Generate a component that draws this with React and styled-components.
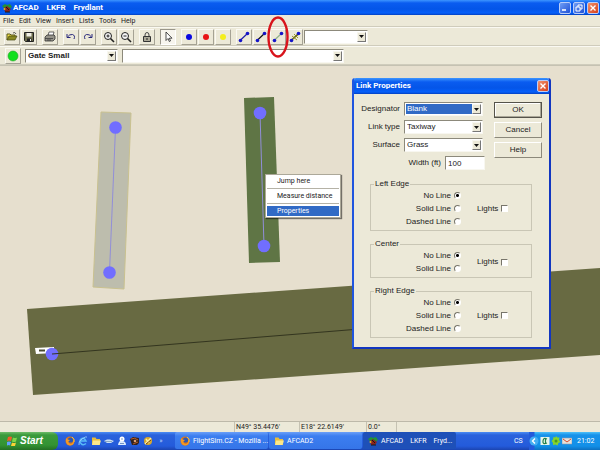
import React from "react";
import styled, { createGlobalStyle, css } from "styled-components";

const Global = createGlobalStyle`
  * { box-sizing: border-box; }
  body { margin: 0; font-family: Roboto, "Liberation Sans", sans-serif; font-size: 7px; color: #222; }
  button, select, input { font: inherit; color: inherit; margin: 0; padding: 0; border: 0; background: none; border-radius: 0; }
  svg { display: block; flex: none; }
`;

const Desktop = styled.div`
  display: flex;
  flex-direction: column;
  min-height: 100vh;
  overflow: hidden;
  background: #ece9d8;
`;

const TitleBar = styled.header`
  display: flex;
  align-items: center;
  height: 15px;
  padding: 0 1px 0 2px;
  gap: 1px;
  background: linear-gradient(#3d95ff 0, #0a5cf0 3px, #0455e8 9px, #0560fa 13px, #0340c0 15px);
  color: #fff;
`;

const TitleText = styled.h1`
  display: flex;
  flex: 1;
  gap: 8px;
  margin: 0;
  font-size: 8px;
  line-height: 12px;
`;

const WindowButton = styled.button`
  display: grid;
  place-items: center;
  width: 12px;
  height: 12px;
  border: 1px solid #b9cdf8;
  border-radius: 2px;
  background: ${(p) => (p.$close ? "linear-gradient(135deg, #f0936f, #d8401a)" : "linear-gradient(135deg, #6f9df5, #1f51d6)")};
`;

const WindowControls = styled.div`
  display: flex;
  gap: 2px;
`;

const MenuBar = styled.nav`
  display: flex;
  height: 12px;
  padding-left: 3px;
  gap: 5px;
  border-bottom: 1px solid #cfccbc;
`;

const MenuButton = styled.button`
  line-height: 10px;
`;

const Toolbar = styled.div`
  display: flex;
  align-items: center;
  height: 19px;
  padding-left: ${(p) => p.$indent || 4}px;
  gap: ${(p) => p.$gap || 5}px;
  border-top: 1px solid #faf9f2;
  border-bottom: 1px solid #cfccbc;
`;

const ToolGroup = styled.div`
  display: flex;
  align-items: center;
  gap: 1px;
`;

const ToolButton = styled.button`
  position: relative;
  display: grid;
  place-items: center;
  width: 16px;
  height: 16px;
  border: 1px solid;
  border-color: ${(p) => (p.$pressed ? "#99968a #fff #fff #99968a" : "#faf9f2 #a5a294 #a5a294 #faf9f2")};
  background: ${(p) => (p.$pressed ? "#f7f5ee" : "#ece9d8")};
`;

const Ring = styled.svg`
  position: absolute;
  left: 50%;
  top: 50%;
  transform: translate(-50%, -50%);
  z-index: 2;
  pointer-events: none;
`;

const ComboFrame = styled.span`
  display: flex;
  align-items: stretch;
  width: ${(p) => p.$width}px;
  height: 14px;
  padding: 1px;
  border: 1px solid;
  border-color: #8c897b #f8f7f0 #f8f7f0 #8c897b;
  background: #fff;
`;

const ComboSelect = styled.select`
  appearance: none;
  flex: 1;
  min-width: 0;
  padding-left: 1px;
  font-family: "Liberation Sans", Arial, sans-serif;
  font-size: 8px;
  line-height: 10px;
  outline: none;
  ${(p) => p.$bold && css`font-weight: 700;`}
  ${(p) => p.$active && css`background: #316ac5; color: #fff;`}
`;

const ComboArrow = styled.span`
  display: grid;
  place-items: center;
  width: 9px;
  border: 1px solid;
  border-color: #f8f7f0 #777 #777 #f8f7f0;
  background: #ece9d8;
`;

const Workspace = styled.main`
  position: relative;
  flex: 1;
  min-height: 356px;
  border-top: 1px solid #c5c2b2;
  background: #e6dfce;
`;

const MapDrawing = styled.svg`
  position: absolute;
  inset: 0;
  width: 100%;
  height: 100%;
`;

const ContextMenu = styled.div`
  position: absolute;
  left: 265px;
  top: 108px;
  width: 76px;
  padding: 1px;
  border: 1px solid #aca899;
  background: #fff;
  box-shadow: 1px 1px 1px rgba(0, 0, 0, 0.5);
`;

const ContextItem = styled.button`
  display: block;
  width: 100%;
  height: 10px;
  padding-left: 10px;
  line-height: 10px;
  text-align: left;
  ${(p) => p.$active && css`background: #316ac5; color: #fff;`}
`;

const ContextRule = styled.hr`
  height: 1px;
  margin: 2px 0;
  border: 0;
  background: #b5b2a6;
`;

const DialogWindow = styled.section`
  position: absolute;
  left: 352px;
  top: 12px;
  width: 199px;
  border: solid #1236c0;
  border-width: 0 2px 2px;
  border-left-color: #1f55df;
  border-radius: 3px 3px 0 0;
  background: #ece9d8;
  font-family: "Liberation Sans", Arial, sans-serif;
  font-size: 8px;
  line-height: 10px;
`;

const DialogTitle = styled.div`
  display: flex;
  align-items: center;
  height: 16px;
  padding-left: 2px;
  background: linear-gradient(#3d95ff 0, #0a5cf0 4px, #0455e8 10px, #0560fa 14px, #0340c0 16px);
  border-radius: 2px 2px 0 0;
  color: #fff;
`;

const DialogHeading = styled.h2`
  flex: 1;
  margin: 0;
  font-family: Roboto, sans-serif;
  font-size: 8px;
`;

const DialogBody = styled.form`
  padding: 8px 7px 9px 5px;
`;

const DialogTop = styled.div`
  display: flex;
  justify-content: space-between;
  align-items: flex-start;
`;

const Fields = styled.div`
  display: flex;
  flex-direction: column;
  gap: 4px;
`;

const Field = styled.div`
  display: flex;
  align-items: center;
  justify-content: flex-end;
  gap: 4px;
  width: 124px;
`;

const WidthField = styled(Field)`
  width: 126px;
`;

const WidthInput = styled.input`
  width: 40px;
  height: 14px;
  padding-left: 2px;
  border: 1px solid;
  border-color: #8c897b #f8f7f0 #f8f7f0 #8c897b;
  background: #fff;
`;

const DialogActions = styled.div`
  display: flex;
  flex-direction: column;
  gap: 4px;
`;

const ActionButton = styled.button`
  width: 48px;
  height: 16px;
  border: 1px solid;
  border-color: ${(p) => (p.$default ? "#55534a" : "#fff #8c897b #8c897b #fff")};
  box-shadow: ${(p) => (p.$default ? "inset -1px -1px 0 #aaa798, inset 1px 1px 0 #fff" : "none")};
`;

const Groups = styled.div`
  display: flex;
  flex-direction: column;
  gap: 8px;
  margin: 9px 10px 0 11px;
`;

const Group = styled.fieldset`
  min-width: 0;
  margin: 0;
  padding: 0 0 2px;
  border: 1px solid #c9c6b5;
`;

const Legend = styled.legend`
  height: 10px;
  margin-left: 3px;
  padding: 0 1px;
`;

const GroupRow = styled.div`
  display: flex;
  align-items: center;
  gap: 16px;
`;

const Radios = styled.div`
  display: flex;
  flex-direction: column;
  width: 90px;
`;

const Choice = styled.label`
  display: flex;
  align-items: center;
  justify-content: flex-end;
  gap: 3px;
  height: 13px;
`;

const Radio = styled.input`
  appearance: none;
  width: 7px;
  height: 7px;
  border: 1px solid;
  border-color: #77756a #fff #fff #77756a;
  border-radius: 50%;
  background: #fff;
  &:checked { background: radial-gradient(circle, #000 0 1px, #fff 2px); }
`;

const Check = styled.input`
  appearance: none;
  width: 7px;
  height: 7px;
  border: 1px solid;
  border-color: #77756a #fff #fff #77756a;
  background: #fff;
`;

const StatusBar = styled.footer`
  display: grid;
  grid-template-columns: 235px 65px 67px 30px 1fr;
  height: 11px;
  border-top: 1px solid #bdb9a9;
`;

const StatusCell = styled.div`
  padding-left: 1px;
  border-right: 1px solid #c5c2b2;
  line-height: 10px;
  white-space: nowrap;
`;

const Taskbar = styled.div`
  display: flex;
  height: 18px;
  background: linear-gradient(#4b8cf3 0, #2a62dc 3px, #245bdb 14px, #1b44b0 18px);
  color: #fff;
`;

const StartButton = styled.button`
  display: flex;
  align-items: center;
  gap: 3px;
  width: 58px;
  padding-left: 7px;
  border-radius: 0 6px 6px 0;
  background: linear-gradient(#6dbb68 0, #3b9a3b 3px, #339333 13px, #246f24 18px);
  color: #fff;
  font-family: "Liberation Sans", Arial, sans-serif;
  font-size: 10px;
  font-style: italic;
  font-weight: 700;
  line-height: 18px;
`;

const QuickLaunch = styled.div`
  display: flex;
  align-items: center;
  gap: 3px;
  width: 117px;
  padding-left: 7px;
`;

const QuickButton = styled.button`
  display: grid;
  place-items: center;
  width: 10px;
  height: 12px;
  color: #b7cdf8;
`;

const Tasks = styled.div`
  display: flex;
  flex: 1;
  gap: 1px;
`;

const Task = styled.button`
  display: flex;
  align-items: center;
  gap: 3px;
  flex: 0 1 93px;
  height: 17px;
  padding-left: 5px;
  border-radius: 2px;
  background: ${(p) => (p.$active ? "#1e50b8" : "linear-gradient(#6ba0f8, #3c7ef0 4px, #3575e8)")};
  color: #fff;
  white-space: pre;
`;

const Language = styled.span`
  align-self: center;
  width: 15px;
`;

const Tray = styled.div`
  display: flex;
  align-items: center;
  gap: 1px;
  width: 71px;
  background: linear-gradient(90deg, #245bdb 0 5px, transparent 6px), linear-gradient(#4cc0fa 0, #1792ea 3px, #1290e8 14px, #0d70c0 18px);
`;

const Clock = styled.time`
  padding-left: 4px;
`;

const icons = {
  open: (
    <>
      <path d="M1 9V3h3l1 1h4v2" fill="#f4e24a" stroke="#56571a" />
      <path d="M1 9l2-4h8L9 9z" fill="#8a8a22" stroke="#44450f" strokeWidth=".7" />
      <path d="M7 2q2-1.500 3 1" fill="none" stroke="#333" strokeWidth=".8" />
    </>
  ),
  save: (
    <>
      <path d="M1.500 1.500h9v9h-8l-1-1z" fill="#6b6b4a" stroke="#222" />
      <path d="M3.500 2h5v3.500h-5z" fill="#f1efe5" />
      <path d="M4 7.500h4.500v3H4z" fill="#222" />
      <path d="M7 8h1v2H7z" fill="#eee" />
    </>
  ),
  print: (
    <>
      <path d="M4 5l1-4h5L9 5z" fill="#fff" stroke="#444" strokeWidth=".8" />
      <path d="M1 6l2-2h7l1 1v3l-2 2H1z" fill="#96948a" stroke="#333" strokeWidth=".8" />
      <path d="M1 7.500h8M3 9h4" stroke="#333" strokeWidth=".7" />
    </>
  ),
  undo: <path d="M2 3v3.500h3.500M2.500 6q2-3 5-2.500 3 1 1.500 4.500" fill="none" stroke="#25257a" />,
  redo: <path d="M10 3v3.500H6.500M9.500 6q-2-3-5-2.500-3 1-1.500 4.500" fill="none" stroke="#25257a" />,
  zoomIn: (
    <>
      <circle cx="5" cy="5" r="3.500" fill="#f5f5f5" stroke="#222" />
      <path d="M3.500 5h3M5 3.500v3" stroke="#222" />
      <path d="M7.500 7.500L11 11" stroke="#222" strokeWidth="1.600" />
    </>
  ),
  zoomOut: (
    <>
      <circle cx="5" cy="5" r="3.500" fill="#f5f5f5" stroke="#222" />
      <path d="M3.500 5h3" stroke="#222" />
      <path d="M7.500 7.500L11 11" stroke="#222" strokeWidth="1.600" />
    </>
  ),
  lock: (
    <>
      <path d="M4 6V4q0-2.500 2-2.500T8 4v2" fill="none" stroke="#444" />
      <path d="M2.500 5.500h7v5h-7z" fill="#aaa796" stroke="#333" />
      <path d="M6 7v2" stroke="#222" />
    </>
  ),
  pointer: <path d="M4 1v8.500l2-2 1.300 3 1.200-.6-1.200-2.700H10z" fill="#fff" stroke="#222" strokeWidth=".8" />,
  blue: <circle cx="6" cy="6" r="3" fill="#0808e0" />,
  red: <circle cx="6" cy="6" r="3" fill="#e81414" />,
  yellow: <circle cx="6" cy="6" r="3" fill="#f4ee1c" />,
  green: <circle cx="6" cy="6" r="5" fill="#0fe01c" stroke="#25a52a" strokeWidth=".6" />,
};

function Icon({ name }) {
  return <svg width="12" height="12" viewBox="0 0 12 12" aria-hidden="true">{icons[name]}</svg>;
}

function LinkIcon({ color, hatch }) {
  return (
    <svg width="12" height="12" viewBox="0 0 12 12" aria-hidden="true">
      <path d="M2 9.500L9.500 2.500" stroke={color} strokeWidth="1.200" />
      {hatch && <path d="M3 5l5 4M5 3l4 4M3 9l6-5" stroke="#8f8c18" strokeWidth=".9" />}
      <circle cx="2.500" cy="9.500" r="1.800" fill="#1414c8" />
      <circle cx="9.500" cy="2.500" r="1.800" fill="#1414c8" />
    </svg>
  );
}

function PlaneIcon() {
  return (
    <svg width="10" height="10" viewBox="0 0 10 10" aria-hidden="true">
      <path d="M0 3l3-2 2 1 3-1 2 3-3 2H3z" fill="#219338" />
      <path d="M2 5l3-2 4 3-2 3H3z" fill="#8b241c" />
      <path d="M3 9h5M4 4l3 3" stroke="#191919" />
      <circle cx="2.500" cy="6" r="1" fill="#e6b220" />
    </svg>
  );
}

function Firefox() {
  return (
    <svg width="10" height="10" viewBox="0 0 10 10" aria-hidden="true">
      <circle cx="5" cy="5" r="4.500" fill="#e0761a" />
      <circle cx="5.500" cy="4" r="2.600" fill="#2b58b4" />
      <path d="M1 2q1 2 4 2L3 6l2 2q3 0 4-4 1 5-4 5.500Q0 9 1 2" fill="#f29a24" />
      <path d="M7 1q3 2 2 5" fill="none" stroke="#f7c63b" />
    </svg>
  );
}

function Folder() {
  return (
    <svg width="10" height="10" viewBox="0 0 10 10" aria-hidden="true">
      <path d="M1 1.500h3.500l1 1.500H9v6H1z" fill="#e8bd3c" />
      <path d="M2 4.500h8L8.500 9H1z" fill="#fbe88b" />
    </svg>
  );
}

const quickIcons = [
  ["Firefox", <Firefox key="i" />],
  ["Internet Explorer", (
    <svg key="i" width="10" height="10" viewBox="0 0 10 10">
      <path d="M8 7.500Q5 10 3 7.500T3 3q3-2 5 2H3" fill="none" stroke="#58baf8" strokeWidth="1.500" />
      <path d="M1 9Q0 6 4 3t5-2" fill="none" stroke="#9fdcff" strokeWidth=".8" />
    </svg>
  )],
  ["Explorer", <Folder key="i" />],
  ["Flight", (
    <svg key="i" width="10" height="10" viewBox="0 0 10 10">
      <path d="M0 5l3-1.500h3L10 5 7 7H3z" fill="#cde1f5" />
      <path d="M1 5.500h7" stroke="#6b8fae" strokeWidth=".7" />
    </svg>
  )],
  ["Messenger", (
    <svg key="i" width="10" height="10" viewBox="0 0 10 10">
      <circle cx="5" cy="3" r="2.500" fill="#fff" />
      <path d="M1 9q1-5 4-4 4 0 4 4z" fill="#dcecff" />
      <path d="M4 3h2M3 7.500h4" stroke="#587fb8" strokeWidth=".8" />
    </svg>
  )],
  ["Eye", (
    <svg key="i" width="10" height="10" viewBox="0 0 10 10">
      <path d="M0 3l3-2 6 1v5L7 9H2z" fill="#34221c" />
      <path d="M1 3q4-2 7 1M3 8l5-2" stroke="#b85c23" fill="none" />
      <circle cx="5" cy="5" r="1.300" fill="#d9a178" />
    </svg>
  )],
  ["Tools", (
    <svg key="i" width="10" height="10" viewBox="0 0 10 10">
      <circle cx="5" cy="5" r="4" fill="#d8a82e" />
      <path d="M2 8l6-6M3 3l3 4" stroke="#fff0a0" strokeWidth="1.500" />
      <path d="M3 8l5-4" stroke="#7c4b16" />
    </svg>
  )],
];

function Combo({ id, width, value, label, bold, active }) {
  return (
    <ComboFrame $width={width}>
      <ComboSelect id={id} aria-label={label} $bold={bold} $active={active} defaultValue={value}>
        <option value={value}>{value}</option>
      </ComboSelect>
      <ComboArrow aria-hidden="true">
        <svg width="5" height="3" viewBox="0 0 5 3"><path d="M0 0h5L2.500 3z" fill="#111" /></svg>
      </ComboArrow>
    </ComboFrame>
  );
}

function EdgeGroup({ title, options }) {
  return (
    <Group>
      <Legend>{title}</Legend>
      <GroupRow>
        <Radios>
          {options.map((option, i) => (
            <Choice key={option}>
              {option}
              <Radio type="radio" name={title} defaultChecked={i === 0} />
            </Choice>
          ))}
        </Radios>
        <Choice>
          Lights
          <Check type="checkbox" />
        </Choice>
      </GroupRow>
    </Group>
  );
}

function Tool({ name, ...rest }) {
  return <ToolButton type="button" aria-label={name} {...rest}><Icon name={name} /></ToolButton>;
}

function CloseGlyph() {
  return <svg width="8" height="8" viewBox="0 0 8 8"><path d="M1.500 1.500l5 5M6.500 1.500l-5 5" stroke="#fff" strokeWidth="1.400" /></svg>;
}

function LinkDialog() {
  return (
    <DialogWindow role="dialog" aria-labelledby="link-title">
      <DialogTitle>
        <DialogHeading id="link-title">Link Properties</DialogHeading>
        <WindowButton type="button" aria-label="Close dialog" $close><CloseGlyph /></WindowButton>
      </DialogTitle>
      <DialogBody>
        <DialogTop>
          <Fields>
            <Field><label htmlFor="designator">Designator</label><Combo id="designator" width={79} value="Blank" active /></Field>
            <Field><label htmlFor="type">Link type</label><Combo id="type" width={79} value="Taxiway" /></Field>
            <Field><label htmlFor="surface">Surface</label><Combo id="surface" width={79} value="Grass" /></Field>
            <WidthField><label htmlFor="width">Width (ft)</label><WidthInput id="width" defaultValue="100" /></WidthField>
          </Fields>
          <DialogActions>
            <ActionButton type="button" $default>OK</ActionButton>
            <ActionButton type="button">Cancel</ActionButton>
            <ActionButton type="button">Help</ActionButton>
          </DialogActions>
        </DialogTop>
        <Groups>
          <EdgeGroup title="Left Edge" options={["No Line", "Solid Line", "Dashed Line"]} />
          <EdgeGroup title="Center" options={["No Line", "Solid Line"]} />
          <EdgeGroup title="Right Edge" options={["No Line", "Solid Line", "Dashed Line"]} />
        </Groups>
      </DialogBody>
    </DialogWindow>
  );
}

function AirportMap() {
  return (
    <MapDrawing viewBox="0 66 600 355" preserveAspectRatio="xMinYMin slice" role="img" aria-label="Airport map">
      <path d="M101 112l30 1-7 176-31-2z" fill="#bdbdad" stroke="#c9c18f" />
      <path d="M244 98l30-1 6 165-31 1z" fill="#5f7545" />
      <path d="M27 309L600 268v87L33 395z" fill="#686a42" />
      <path d="M115.500 128l-6 144M260 113l4 133" stroke="#918ed8" />
      <path d="M35 348l19-1v6l-18 1z" fill="#fff" />
      <path d="M39 350.500h6" stroke="#4a4a32" strokeWidth="2" />
      <g fill="#716eff">
        <circle cx="115.500" cy="127.500" r="6.300" />
        <circle cx="109.500" cy="272.500" r="6.300" />
        <circle cx="260" cy="113" r="6.300" />
        <circle cx="264" cy="246" r="6.300" />
        <circle cx="52" cy="354" r="6.300" />
      </g>
      <path d="M52 354l308-25" stroke="#33351f" />
    </MapDrawing>
  );
}

function MainTitle() {
  return (
    <TitleBar>
      <PlaneIcon />
      <TitleText><span>AFCAD</span><span>LKFR</span><span>Frydlant</span></TitleText>
      <WindowControls>
        <WindowButton type="button" aria-label="Minimize"><svg width="8" height="8" viewBox="0 0 8 8"><path d="M1 6h4" stroke="#fff" strokeWidth="1.600" /></svg></WindowButton>
        <WindowButton type="button" aria-label="Restore"><svg width="8" height="8" viewBox="0 0 8 8"><path d="M3 3V1h4v4H5M1 3h4v4H1z" fill="none" stroke="#fff" /></svg></WindowButton>
        <WindowButton type="button" aria-label="Close" $close><CloseGlyph /></WindowButton>
      </WindowControls>
    </TitleBar>
  );
}

export default function App() {
  return (
    <Desktop>
      <Global />
      <MainTitle />
      <MenuBar>
        {["File", "Edit", "View", "Insert", "Lists", "Tools", "Help"].map((m) => <MenuButton type="button" key={m}>{m}</MenuButton>)}
      </MenuBar>
      <Toolbar>
        <ToolGroup><Tool name="open" /><Tool name="save" /></ToolGroup>
        <Tool name="print" />
        <ToolGroup><Tool name="undo" /><Tool name="redo" /></ToolGroup>
        <ToolGroup><Tool name="zoomIn" /><Tool name="zoomOut" /></ToolGroup>
        <Tool name="lock" />
        <Tool name="pointer" $pressed />
        <ToolGroup><Tool name="blue" /><Tool name="red" /><Tool name="yellow" /></ToolGroup>
        <ToolGroup>
          <ToolButton type="button" aria-label="Taxiway link"><LinkIcon color="#1c1ca8" /></ToolButton>
          <ToolButton type="button" aria-label="Runway link"><LinkIcon color="#111" /></ToolButton>
          <ToolButton type="button" aria-label="Parking link">
            <LinkIcon color="#8db08a" />
            <Ring width="24" height="44" viewBox="0 0 24 44"><ellipse cx="12" cy="22" rx="9.500" ry="19.500" fill="none" stroke="#d8141c" strokeWidth="2.400" /></Ring>
          </ToolButton>
          <ToolButton type="button" aria-label="Closed link"><LinkIcon color="#55530f" hatch /></ToolButton>
          <Combo width={64} value="" label="Name" />
        </ToolGroup>
      </Toolbar>
      <Toolbar $indent={5} $gap={4}>
        <Tool name="green" />
        <Combo width={93} value="Gate Small" label="Parking type" bold />
        <Combo width={222} value="" label="Parking" />
      </Toolbar>
      <Workspace>
        <AirportMap />
        <ContextMenu>
          <ContextItem type="button">Jump here</ContextItem>
          <ContextRule />
          <ContextItem type="button">Measure distance</ContextItem>
          <ContextRule />
          <ContextItem type="button" $active>Properties</ContextItem>
        </ContextMenu>
        <LinkDialog />
      </Workspace>
      <StatusBar>
        <StatusCell />
        <StatusCell>N49° 35.4476'</StatusCell>
        <StatusCell>E18° 22.6149'</StatusCell>
        <StatusCell>0.0°</StatusCell>
      </StatusBar>
      <Taskbar>
        <StartButton type="button">
          <svg width="10" height="10" viewBox="0 0 10 10" aria-hidden="true">
            <path d="M1 1q2-1 4 0L4 5Q2 4 0 5z" fill="#f35c28" />
            <path d="M6 1.500q2 1 4 0L9 5.500q-2 1-4 0z" fill="#7fd64a" />
            <path d="M0 6q2-1 4 0L3 9.500q-1-1-3 0z" fill="#62a0ff" />
            <path d="M5 6.500q2 1 4 0L8 10q-2 1-4 0z" fill="#fbd136" />
          </svg>
          Start
        </StartButton>
        <QuickLaunch>
          {quickIcons.map(([name, icon]) => <QuickButton type="button" key={name} aria-label={name}>{icon}</QuickButton>)}
          <QuickButton type="button">»</QuickButton>
        </QuickLaunch>
        <Tasks>
          <Task type="button"><Firefox />FlightSim.CZ - Mozilla ...</Task>
          <Task type="button"><Folder />AFCAD2</Task>
          <Task type="button" $active><PlaneIcon />{"AFCAD    LKFR    Fryd..."}</Task>
        </Tasks>
        <Language>CS</Language>
        <Tray>
          <svg width="10" height="10" viewBox="0 0 10 10"><circle cx="5" cy="5" r="4.500" fill="#44aef2" /><path d="M6 2.500L3.500 5 6 7.500" fill="none" stroke="#fff" strokeWidth="1.400" /></svg>
          <svg width="10" height="10" viewBox="0 0 9 10"><path d="M0 1h9v8H0z" fill="#e9f5e9" /><path d="M6.500 3Q3 1 2.500 5T6.500 7M5 2v6" fill="none" stroke="#23804a" strokeWidth="1.200" /></svg>
          <svg width="10" height="10" viewBox="0 0 9 10"><path d="M4.500 0l1.300 1.500L8 1.500 7.500 4 9 6 7 7 6 9.500 4 8.500 1.500 9 1.500 7 0 5l1.500-1.500L2 1l2 .5z" fill="#86d42c" /><circle cx="4.500" cy="5" r="1.500" fill="#4e9c1f" /></svg>
          <svg width="10" height="10" viewBox="0 0 10 10"><path d="M0 2h10v6H0z" fill="#e6e2da" stroke="#8e98ac" strokeWidth=".6" /><path d="M1 3l4 3 4-3" fill="none" stroke="#d94c2c" /></svg>
          <Clock>21:02</Clock>
        </Tray>
      </Taskbar>
    </Desktop>
  );
}
